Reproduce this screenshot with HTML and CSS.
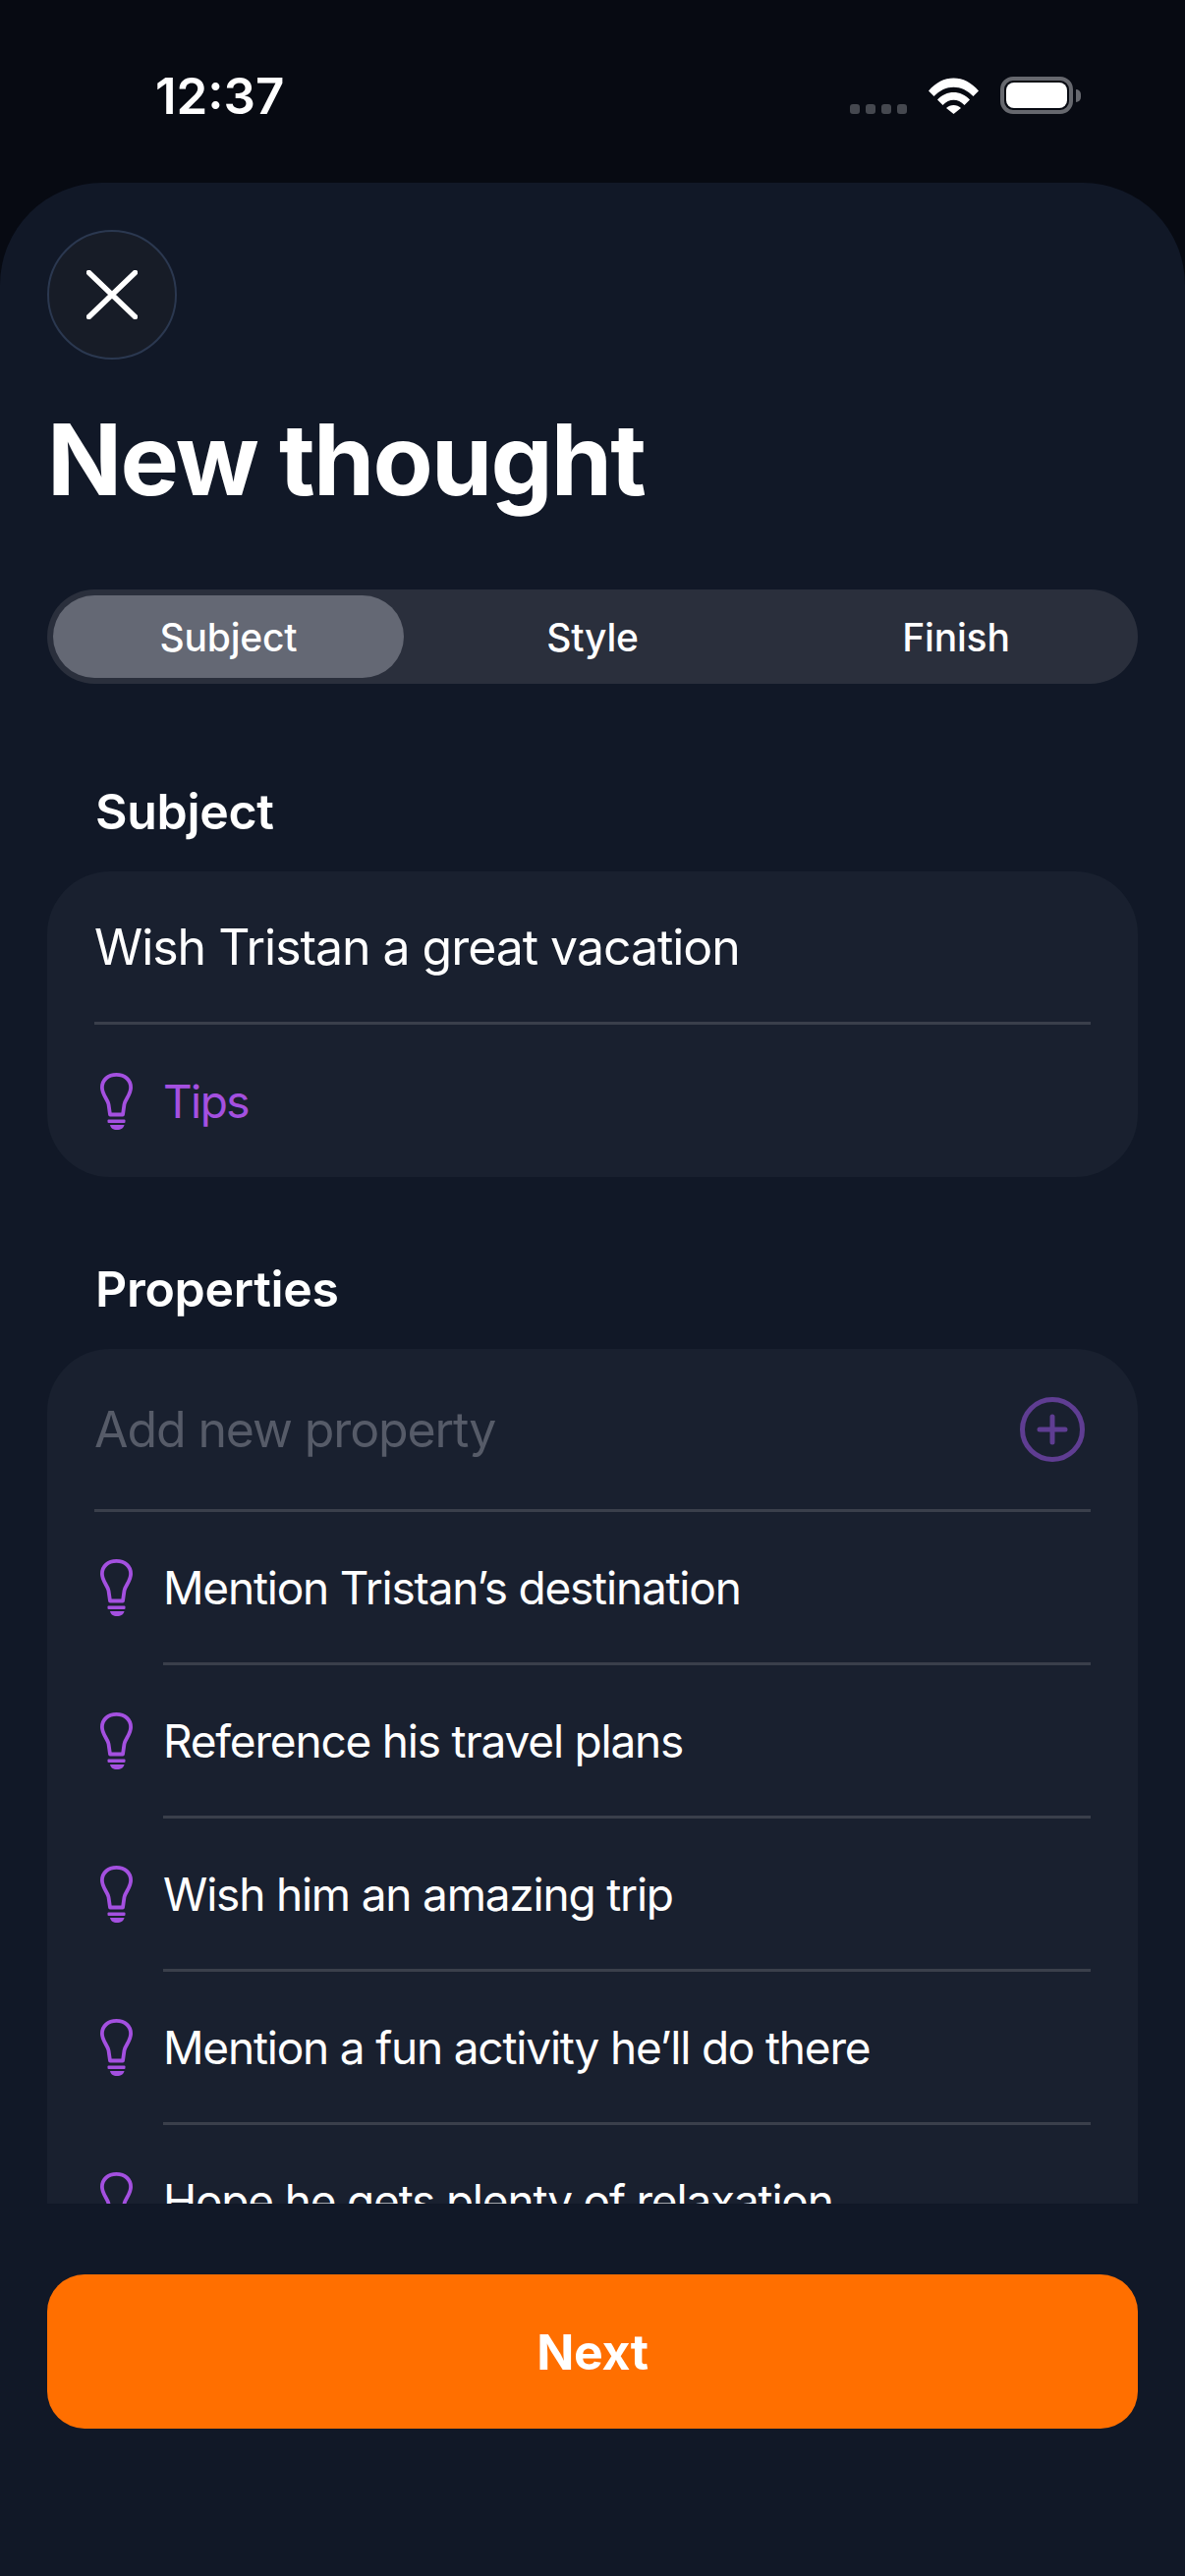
FILE: index.html
```html
<!DOCTYPE html>
<html lang="en">
<head>
  <meta charset="UTF-8">
  <meta name="viewport" content="width=device-width, initial-scale=1.0">
  <title>New thought</title>
  <link rel="stylesheet" href="styles.css">
</head>
<body>
  <svg class="icon-defs" width="0" height="0">
    <symbol id="bulb" viewBox="0 0 33 58">
      <path d="M10 42.500 L8.500 32 C7.500 27 1.900 22 1.900 15 C1.900 7 8 1.900 16.500 1.900 C25 1.900 31.100 7 31.100 15 C31.100 22 25.500 27 24.500 32 L23 42.500 Z" fill="none" stroke="currentColor" stroke-width="3.800" stroke-linejoin="round"/>
      <rect x="7.500" y="47.500" width="18" height="3.500" rx="1" fill="currentColor"/>
      <path d="M10 53 H24.500 C24 56 21 58 17 58 C13 58 10.500 56 10 53 Z" fill="currentColor"/>
    </symbol>
  </svg>

  <div class="status-bar">
    <span class="status-time">12:37</span>
    <div class="status-icons">
      <div class="signal"><i></i><i></i><i></i><i></i></div>
      <svg class="wifi" viewBox="0 0 51 37" width="51" height="37">
        <path d="M0 13.500 C14 -4 37 -4 51 13.500 L45.500 19 C34 6.500 17 6.500 5.500 19 Z" fill="#fff"/>
        <path d="M9 22.500 C18 12.500 33 12.500 42 22.500 L36.500 28 C30 21 21 21 14.500 28 Z" fill="#fff"/>
        <path d="M18 31 C22 27 29 27 33 31 L25.500 37 Z" fill="#fff"/>
      </svg>
      <div class="battery"><div class="battery-fill"></div></div>
      <div class="battery-cap"></div>
    </div>
  </div>

  <main class="sheet">
    <button class="close-button" aria-label="Close">
      <svg viewBox="0 0 52 50" width="52" height="50">
        <path d="M2.500 2.500 L49.500 47.500 M49.500 2.500 L2.500 47.500" stroke="#fff" stroke-width="5.500" stroke-linecap="round" fill="none"/>
      </svg>
    </button>
    <h1 class="title">New thought</h1>

    <div class="tabs">
      <div class="tab tab-active">Subject</div>
      <div class="tab">Style</div>
      <div class="tab">Finish</div>
    </div>

    <div class="scroll-area">
      <h2 class="section-label">Subject</h2>
      <section class="card card-subject">
        <div class="subject-text">Wish Tristan a great vacation</div>
        <div class="divider"></div>
        <div class="tips-row">
          <svg class="bulb"><use href="#bulb"/></svg>
          <span>Tips</span>
        </div>
      </section>

      <h2 class="section-label label-properties">Properties</h2>
      <section class="card">
        <div class="add-row">
          <span class="placeholder">Add new property</span>
          <svg class="plus" viewBox="0 0 66 66" width="66" height="66">
            <circle cx="33" cy="33" r="30.500" fill="none" stroke="currentColor" stroke-width="5"/>
            <path d="M33 20 V46 M20 33 H46" stroke="currentColor" stroke-width="5" stroke-linecap="round"/>
          </svg>
        </div>
        <div class="divider"></div>
        <div class="property">
          <svg class="bulb"><use href="#bulb"/></svg>
          <div class="property-text">Mention Tristan’s destination</div>
        </div>
        <div class="property">
          <svg class="bulb"><use href="#bulb"/></svg>
          <div class="property-text">Reference his travel plans</div>
        </div>
        <div class="property">
          <svg class="bulb"><use href="#bulb"/></svg>
          <div class="property-text">Wish him an amazing trip</div>
        </div>
        <div class="property">
          <svg class="bulb"><use href="#bulb"/></svg>
          <div class="property-text">Mention a fun activity he’ll do there</div>
        </div>
        <div class="property">
          <svg class="bulb"><use href="#bulb"/></svg>
          <div class="property-text">Hope he gets plenty of relaxation</div>
        </div>
      </section>
    </div>

    <div class="footer">
      <button class="next-button">Next</button>
    </div>
  </main>
</body>
</html>
```

FILE: styles.css
```css
:root {
  --top: #070a12;
  --background: #111827;
  --card: #19202f;
  --divider: #3a3f4b;
  --purple: #a450e0;
  --orange: #ff6f00;
}

* {
  margin: 0;
  padding: 0;
  box-sizing: border-box;
}

html,
body {
  width: 1206px;
  height: 2622px;
  overflow: hidden;
}

body {
  font-family: Inter, "Noto Sans", sans-serif;
  background-color: var(--top);
  color: #ffffff;
  display: flex;
  flex-direction: column;
}

.icon-defs {
  position: absolute;
}

.status-bar {
  height: 186px;
  flex-shrink: 0;
  display: flex;
  justify-content: space-between;
  padding: 78px 106px 0 158px;
}

.status-time {
  font-size: 51px;
  font-weight: 600;
  line-height: 40px;
}

.status-icons {
  display: flex;
  align-items: flex-end;
  height: 38px;
}

.signal {
  display: flex;
  gap: 6px;
  margin-right: 22px;
}

.signal i {
  width: 10px;
  height: 10px;
  border-radius: 3px;
  background-color: #45484f;
}

.wifi {
  margin-right: 22px;
}

.battery {
  width: 74px;
  height: 38px;
  border: 4px solid #66686e;
  border-radius: 13px;
  padding: 2px;
}

.battery-fill {
  height: 100%;
  background-color: #ffffff;
  border-radius: 8px;
}

.battery-cap {
  width: 5px;
  height: 13px;
  margin: 0 0 12px 3px;
  background-color: #66686e;
  border-radius: 0 5px 5px 0;
}

.sheet {
  flex: 1;
  min-height: 0;
  display: flex;
  flex-direction: column;
  background-color: var(--background);
  border-radius: 104px 104px 0 0;
  padding: 48px 48px 0;
}

.close-button {
  width: 132px;
  height: 132px;
  flex-shrink: 0;
  display: flex;
  align-items: center;
  justify-content: center;
  background-color: #171c27;
  border: 2px solid #2b3850;
  border-radius: 50%;
}

.title {
  font-size: 100px;
  font-weight: 700;
  line-height: 120px;
  margin: 42px 0 0 0;
  letter-spacing: -1.8px;
}

.tabs {
  display: grid;
  grid-template-columns: repeat(3, 1fr);
  height: 96px;
  flex-shrink: 0;
  margin-top: 72px;
  background-color: #2a2f3c;
  border-radius: 48px;
}

.tab {
  display: flex;
  align-items: center;
  justify-content: center;
  font-size: 39px;
  font-weight: 500;
  letter-spacing: -0.2px;
}

.tab-active {
  margin: 6px 7px 6px 6px;
  background-color: #646874;
  border-radius: 42px;
}

.scroll-area {
  flex: 1;
  min-height: 0;
  overflow: hidden;
}

.section-label {
  font-size: 50px;
  font-weight: 600;
  line-height: 60px;
  letter-spacing: -0.3px;
  margin: 100px 0 31px 49px;
}

.label-properties {
  margin-top: 84px;
  margin-bottom: 31px;
}

.card {
  background-color: var(--card);
  border-radius: 64px;
  padding: 0 48px;
}

.card-subject {
  height: 311px;
}

.divider {
  height: 3px;
  background-color: var(--divider);
}

.subject-text {
  height: 153px;
  display: flex;
  align-items: center;
  font-size: 50px;
  letter-spacing: -1.05px;
}

.tips-row {
  display: flex;
  align-items: center;
  gap: 31px;
  height: 155px;
  padding-left: 6px;
  color: var(--purple);
  font-size: 46px;
  letter-spacing: -1.6px;
}

.bulb {
  width: 33px;
  height: 58px;
  flex-shrink: 0;
  color: var(--purple);
}

.add-row {
  height: 163px;
  display: flex;
  align-items: center;
  justify-content: space-between;
  padding-right: 6px;
  font-size: 50px;
  letter-spacing: -1.1px;
}

.placeholder {
  color: #565b68;
}

.plus {
  color: #5f3d92;
}

.property {
  display: flex;
  align-items: flex-start;
  padding-left: 6px;
  gap: 31px;
}

.bulb {
  margin-top: 48px;
}

.tips-row .bulb {
  margin-top: 0;
}

.property-text {
  flex: 1;
  height: 156px;
  display: flex;
  align-items: center;
  font-size: 46px;
  letter-spacing: -1.2px;
  border-bottom: 3px solid var(--divider);
}

.footer {
  height: 379px;
  flex-shrink: 0;
  padding-top: 72px;
}

.next-button {
  width: 100%;
  height: 157px;
  border: none;
  border-radius: 38px;
  background-color: var(--orange);
  color: #ffffff;
  font-family: inherit;
  font-size: 50px;
  font-weight: 700;
  letter-spacing: -0.3px;
}
```
